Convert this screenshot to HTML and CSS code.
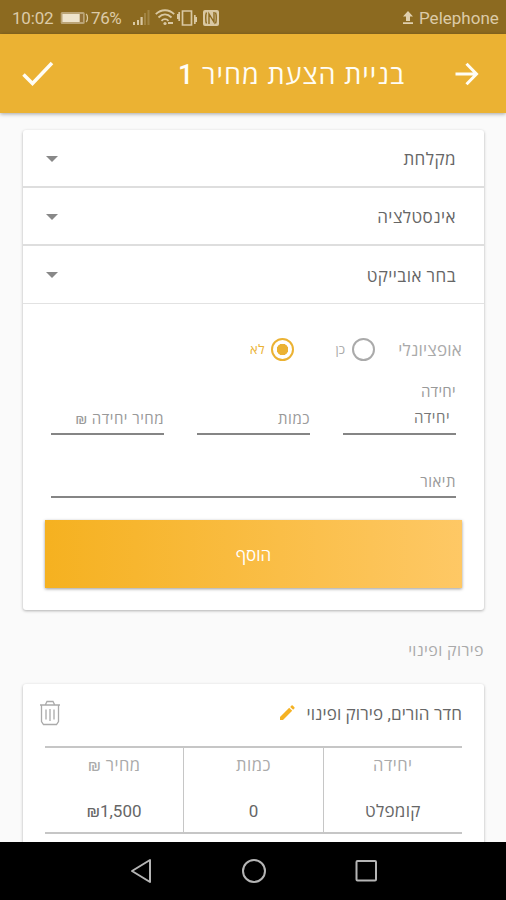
FILE: index.html
```html
<!DOCTYPE html>
<html lang="he" dir="rtl">
<head>
<meta charset="utf-8">
<title>בניית הצעת מחיר</title>
<link rel="stylesheet" href="styles.css">
</head>
<body>
<div class="phone">
  <div class="status" dir="ltr">
    <span class="clock">10:02</span>
    <svg class="battery" width="29" height="14" viewBox="0 0 29 14"><rect x=".7" y="1" width="24" height="12" rx="1.5" fill="#bba476"/><rect x="2.5" y="3" width="17" height="8" fill="#efe4cc"/><path d="M20 3h3v8h-3z" fill="#947238"/><path d="M26 3c2 1 2 7 0 8" fill="none" stroke="#d9c8a3" stroke-width="1.3"/></svg>
    <span class="percent">76%</span>
    <svg class="signal" width="17" height="17" viewBox="0 0 17 17"><g fill="#d9c8a3"><path d="M0 13h2v3H0zM4 11h2v5H4zM7.500 8h2.200v8H7.500z"/><path d="M11 4h2v12h-2zM14.500 1h2v15h-2z" opacity=".28"/></g></svg>
    <svg class="wifi" width="20" height="17" viewBox="0 0 20 17"><g fill="none" stroke="#d9c8a3" stroke-width="1.800"><path d="M.8 5.200C6-.1 14-.1 19.200 5.200M3.500 8.500c4-4 9-4 13 0M6.500 11.800c2-2.200 5-2.200 7 0"/></g><circle cx="10" cy="14.500" r="1.600" fill="#d9c8a3"/><path d="M13 14h5" stroke="#d9c8a3" stroke-width="2"/></svg>
    <svg class="vibrate" width="20" height="16" viewBox="0 0 20 16"><path d="M5.500 1h9v14h-9zM2.200 2v9M17.800 5v9M.5 4v5M19.500 7v5" fill="none" stroke="#d9c8a3" stroke-width="1.700"/></svg>
    <svg class="nfc" width="16" height="16" viewBox="0 0 16 16"><rect width="16" height="16" rx="2" fill="#d9c8a3"/><path d="M3.500 2.500c-1 2-1 9 0 11M6 14V4l5 8V2M12.500 2.500c1 2 1 9 0 11" fill="none" stroke="#8c6a20" stroke-width="1.400"/></svg>
    <svg class="upload" width="12" height="14" viewBox="0 0 12 14"><path d="M6 0l5 5.500H8V10H4V5.500H1zM1 11.300h10V13H1z" fill="#e0d0ae"/></svg>
    <span class="carrier">Pelephone</span>
  </div>
  <header class="appbar">
    <svg class="arrow" width="26" height="26" viewBox="0 0 26 26"><path d="M1.500 13H22M12.500 2.800l10 10.200-10 10.200" fill="none" stroke="#fffdf5" stroke-width="3"/></svg>
    <h1 class="title">בניית הצעת מחיר <b>1</b></h1>
    <svg class="check" width="32" height="26" viewBox="0 0 32 26"><path d="M1.500 13.500l9 9L30 2" fill="none" stroke="#fffdf5" stroke-width="3.500"/></svg>
  </header>
  <main class="content">
    <section class="card form">
      <div class="select"><span>מקלחת</span><i class="caret"></i></div>
      <div class="select"><span>אינסטלציה</span><i class="caret"></i></div>
      <div class="select last"><span>בחר אובייקט</span><i class="caret"></i></div>
      <div class="options">
        <span class="optlabel">אופציונלי</span>
        <i class="radio"></i><span class="yes">כן</span>
        <i class="radio on"></i><span class="no">לא</span>
      </div>
      <div class="fields">
        <div class="field unit"><span class="float">יחידה</span><span class="value">יחידה</span></div>
        <div class="field"><span class="hint">כמות</span></div>
        <div class="field"><span class="hint price">מחיר יחידה ₪</span></div>
      </div>
      <div class="field desc"><span class="hint">תיאור</span></div>
      <div class="button">הוסף</div>
    </section>
    <h2 class="section">פירוק ופינוי</h2>
    <section class="card item">
      <div class="itemhead">
        <span class="itemtitle">חדר הורים, פירוק ופינוי</span>
        <svg class="pencil" width="16" height="16" viewBox="0 0 16 16"><path d="M1 12l9.200-9.200 3 3L4 15H1zM11.200 1.900l1.300-1.300q.6-.5 1.200 0l1.700 1.700q.5.600 0 1.200l-1.300 1.300z" fill="#f5b223"/></svg>
        <svg class="trash" width="22" height="26" viewBox="0 0 22 26"><path d="M1 5h20M6.500 4.500 8 1.500h6l1.500 3M2.500 5v16.500l2 3h13l2-3V5M7 9.500v10M11 9v12M15 9.500v10" fill="none" stroke="#aaa" stroke-width="1.300"/></svg>
      </div>
      <div class="table">
        <div class="col"><span class="th">יחידה</span><span class="td">קומפלט</span></div>
        <div class="col"><span class="th">כמות</span><span class="td num">0</span></div>
        <div class="col"><span class="th">מחיר ₪</span><span class="td num" dir="ltr">₪1,500</span></div>
      </div>
    </section>
  </main>
  <nav class="nav" dir="ltr">
    <svg width="24" height="26" viewBox="0 0 24 26"><path d="M3 13 21 2v22z" fill="none" stroke="#b5b5b5" stroke-width="2" stroke-linejoin="round"/></svg>
    <svg width="26" height="26" viewBox="0 0 26 26"><circle cx="13" cy="13" r="11" fill="none" stroke="#b5b5b5" stroke-width="2"/></svg>
    <svg width="24" height="24" viewBox="0 0 24 24"><rect x="2.500" y="2" width="19.500" height="19.500" rx="1" fill="none" stroke="#b5b5b5" stroke-width="2"/></svg>
  </nav>
</div>
</body>
</html>
```
FILE: styles.css
```css
* { box-sizing: border-box; }
body { margin: 0; font-family: Roboto, "Open Sans", "Noto Sans", sans-serif; }
svg { display: block; flex: none; }
.phone { width: 506px; height: 900px; display: flex; flex-direction: column; overflow: hidden; background: #fafafa; }
.status { height: 34px; flex: none; display: flex; align-items: center; background: #8c6a20; color: #dccba8; padding: 1px 8px 0 12px; font-size: 17px; white-space: nowrap; }
.clock { width: 48px; letter-spacing: -.2px; }
.percent { width: 40px; margin-left: 2px; letter-spacing: -.4px; }
.signal { margin-left: 2px; }
.wifi { margin-left: 5px; }
.vibrate { margin-left: 2px; }
.nfc { margin-left: 6px; }
.upload { margin-left: auto; margin-right: 5px; }
.carrier { width: 79px; }
.appbar { height: 79px; flex: none; display: flex; align-items: center; padding: 0 26px 0 22px; background: #ebb233; color: #fffdf5; box-shadow: 0 1px 4px rgba(0,0,0,.35); z-index: 1; }
.title { margin: 3px 49px 0 0; font-size: 27px; font-weight: 400; line-height: 40px; letter-spacing: 1px; white-space: nowrap; }
.title b { font-weight: 500; }
.check { margin-right: auto; }
.content { flex: 1; min-height: 0; overflow: hidden; padding: 17px 22px 0 23px; }
.card { background: #fff; border-radius: 3px; box-shadow: 0 1px 3px rgba(0,0,0,.3); }
.form { height: 480px; }
.select { height: 58px; display: flex; align-items: center; justify-content: space-between; padding: 1px 28px 0 23px; border-bottom: 2px solid #dedede; font-size: 17px; letter-spacing: .45px; color: #666; }
.select.last { border-bottom: 1px solid #e2e2e2; }
.caret { border: 6px solid transparent; border-top-color: #888; border-bottom: 0; }
.options { display: flex; align-items: center; height: 28px; margin-top: 31px; padding-right: 22px; white-space: nowrap; }
.optlabel { width: 87px; font-size: 17px; letter-spacing: .2px; color: #aaa; }
.radio { width: 23px; height: 23px; border: 2px solid #aaa; border-radius: 50%; flex: none; }
.radio.on { border-color: #ebb233; background: radial-gradient(circle, #ebb233 5.500px, #fff 6px); }
.yes { width: 51px; margin-right: 7px; font-size: 13px; color: #aaa; }
.no { margin-right: 6px; font-size: 13px; letter-spacing: .5px; color: #ebb233; }
.fields { display: flex; gap: 33px; padding: 0 28px; height: 72px; }
.field { width: 113px; border-bottom: 2px solid #858585; display: flex; flex-direction: column; justify-content: flex-end; white-space: nowrap; }
.float { font-size: 15px; line-height: 20px; letter-spacing: .3px; margin-bottom: 6px; color: #999; }
.value { font-size: 15px; line-height: 20px; letter-spacing: .5px; margin: 0 6px 5px 0; color: #777; }
.hint { font-size: 15px; line-height: 20px; letter-spacing: .5px; margin-bottom: 4px; color: #999; }
.desc { width: auto; height: 63px; margin: 0 28px; }
.button { width: 417px; height: 68px; margin: 22px 22px 0 0; display: flex; align-items: center; justify-content: center; background: linear-gradient(90deg, #f5b120, #fec865); color: #fff; font-size: 17px; box-shadow: 0 1px 3px rgba(0,0,0,.4); }
.section { margin: 29px 0 21px; font-size: 16px; line-height: 24px; letter-spacing: .4px; font-weight: 400; color: #aaa; }
.item { height: 200px; padding: 0 22px; }
.itemhead { height: 62px; display: flex; align-items: center; padding-bottom: 4px; }
.itemtitle { font-size: 17px; letter-spacing: .1px; color: #666; white-space: nowrap; }
.pencil { margin-right: 11px; }
.trash { margin: 0 auto 0 -6px; }
.table { display: flex; height: 88px; border-top: 2px solid #c6c6c6; border-bottom: 2px solid #c6c6c6; }
.col { flex: 1; display: flex; flex-direction: column; align-items: center; padding-top: 6px; }
.col + .col { border-right: 1px solid #c6c6c6; }
.th { font-size: 16.500px; letter-spacing: .5px; line-height: 24px; color: #aaa; }
.td { font-size: 17px; letter-spacing: .3px; line-height: 24px; margin-top: 21px; color: #666; }
.num { letter-spacing: 0; }
.nav { height: 58px; flex: none; display: flex; align-items: center; justify-content: space-between; padding: 0 128px 0 129px; background: #000; }
```
